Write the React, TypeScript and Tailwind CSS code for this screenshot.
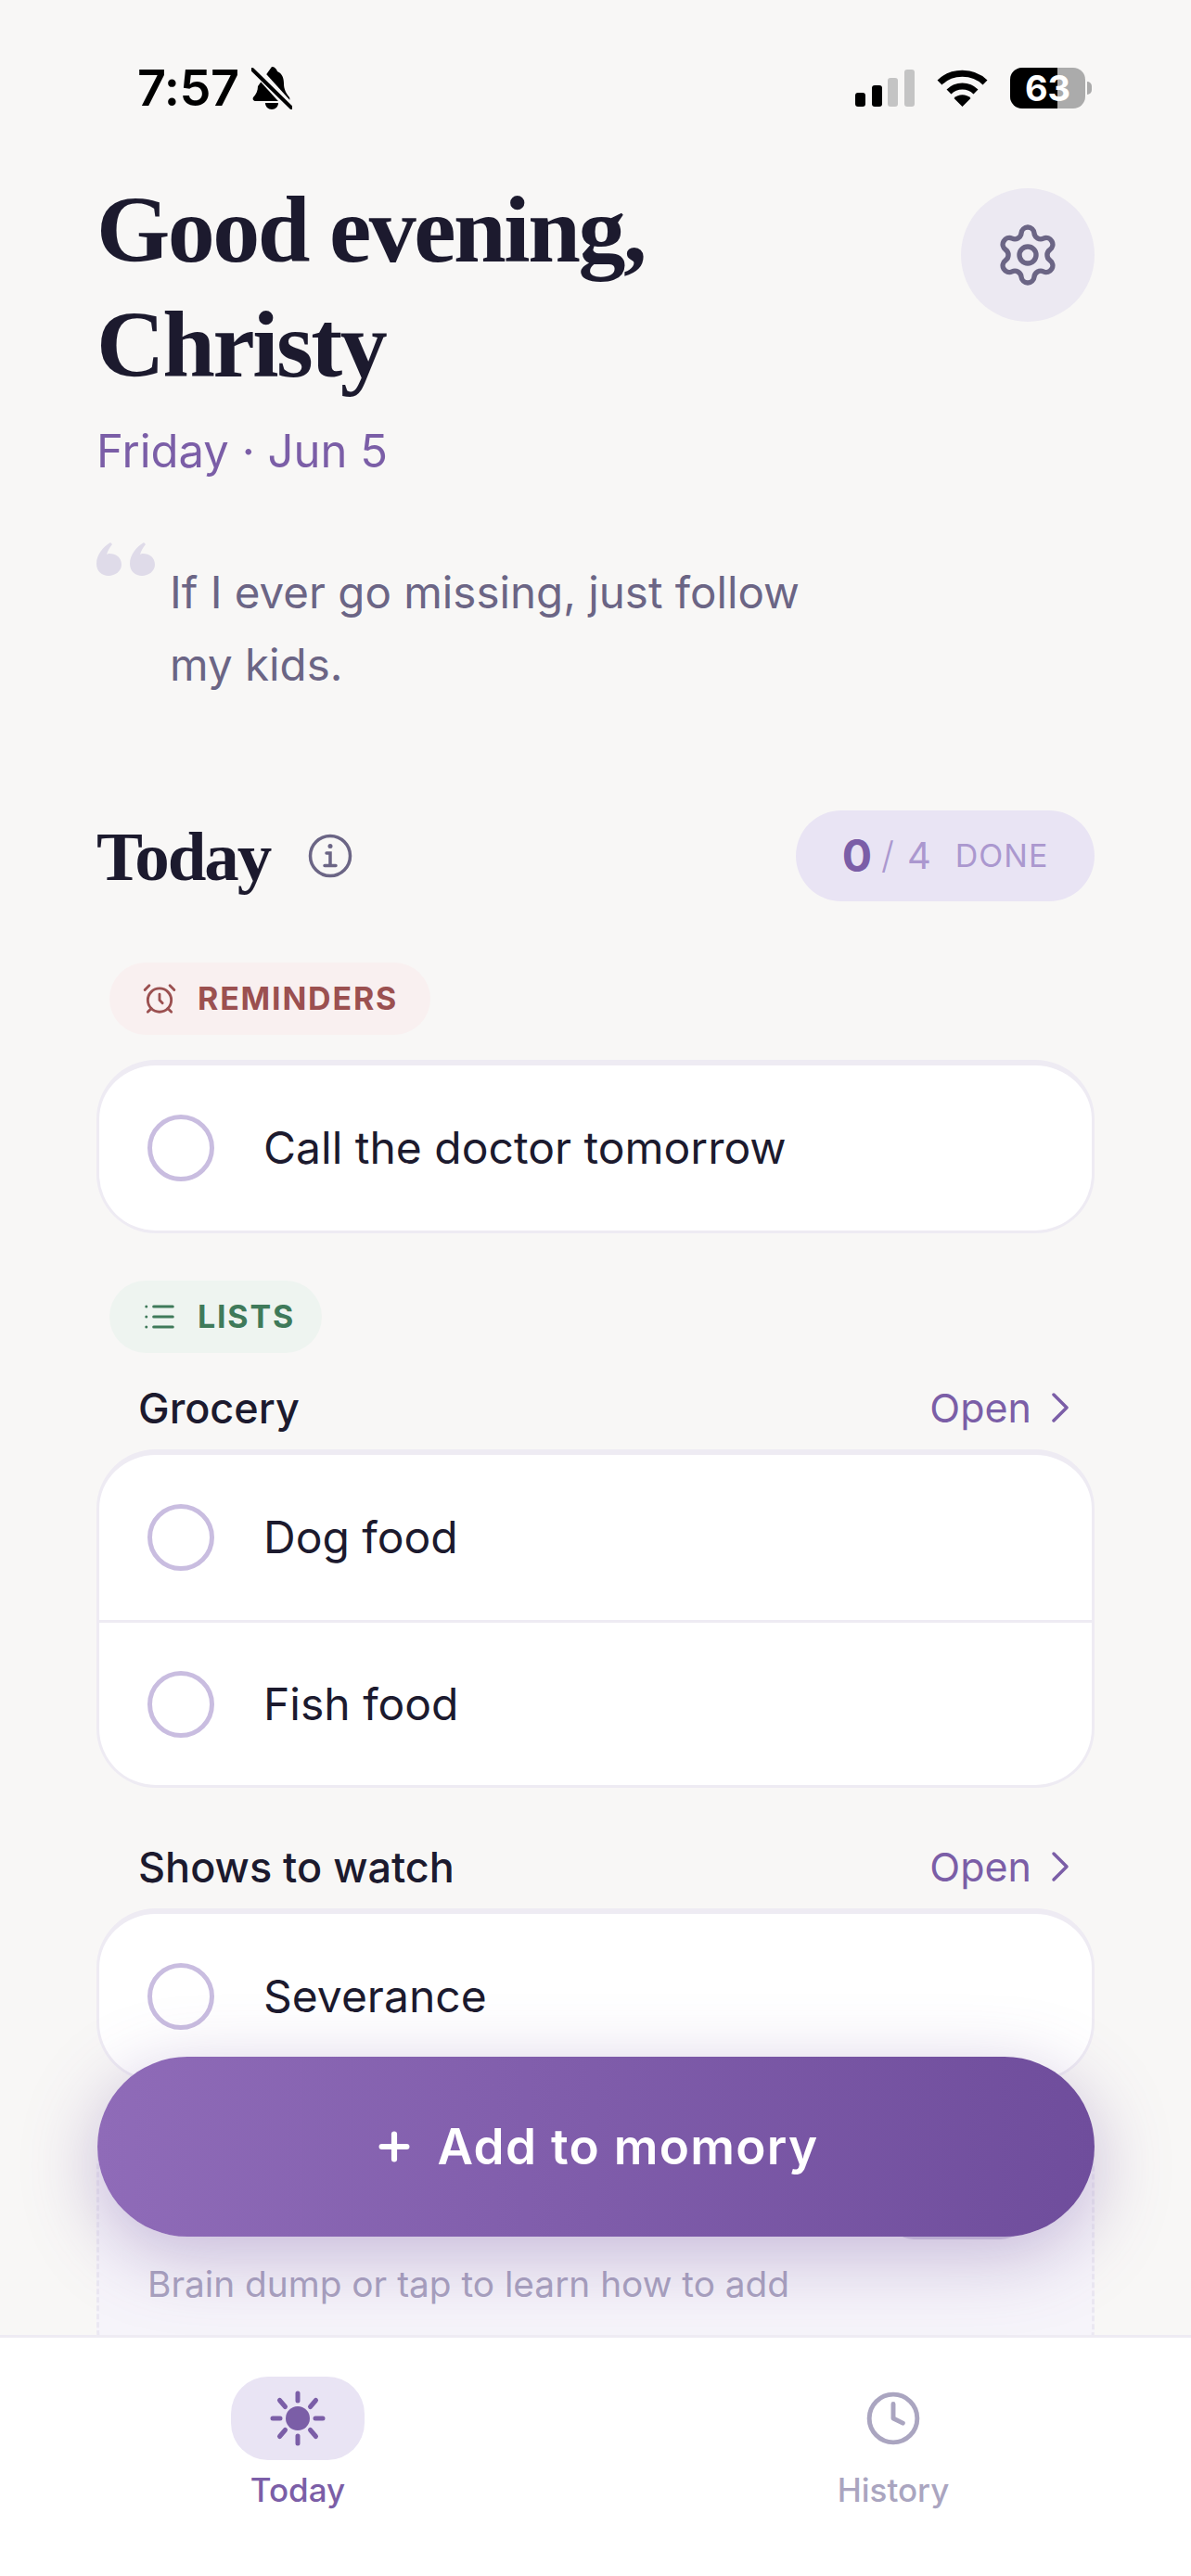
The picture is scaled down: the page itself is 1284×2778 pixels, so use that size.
import React from "react";
import { AlarmClock, Clock, List, Plus, Settings } from "lucide-react";

const sans = "font-['Inter','Noto_Sans',sans-serif]";
const serif = "font-['Liberation_Serif',serif]";

const StatusBar: React.FC = () => (
  <div className="flex h-[190px] items-center justify-between pl-[148px] pr-[107px]">
    <div className="flex items-center gap-[13px]">
      <span className="text-[54px] leading-none font-semibold tracking-[-0.5px] text-black">7:57</span>
      <svg width="44" height="46" viewBox="0 0 44 46">
        <path d="M22 0c3 0 5 2 6 5 5 2 7 7 7 13 0 6 2 10 6 15 1 3 0 4-3 4H5c-3 0-4-2-3-4 3-3 5-7 5-12L22 0z" fill="#000" />
        <path d="M15 39h14c0 4-3 7-7 7s-7-3-7-7z" fill="#000" />
        <path d="M3 1 42 44" stroke="#f8f7f6" strokeWidth="10" />
        <path d="M1 3 43 44" stroke="#000" strokeWidth="4" strokeLinecap="round" />
      </svg>
    </div>
    <div className="flex items-center">
      <svg width="64" height="40" viewBox="0 0 64 40">
        <rect x="0" y="25" width="11" height="15" rx="3" fill="#000" />
        <rect x="18" y="17" width="11" height="23" rx="3" fill="#000" />
        <rect x="35" y="9" width="11" height="31" rx="3" fill="#c4c4c4" />
        <rect x="53" y="0" width="11" height="40" rx="3" fill="#c4c4c4" />
      </svg>
      <svg className="ml-[24px]" width="55" height="40" viewBox="0 0 55 40" fill="none" stroke="#000" strokeWidth="7">
        <path d="M3 14C16 1 39 1 52 14" />
        <path d="M13 24C21 16 34 16 42 24" />
        <path d="M27.5 40 18.500 31C23 26 32 26 36.500 31z" fill="#000" stroke="none" />
      </svg>
      <div className="ml-[24px] flex items-center">
        <div className="relative flex h-[44px] w-[81px] items-center justify-center overflow-hidden rounded-[13px] bg-[#ababab]">
          <div className="absolute top-0 bottom-0 left-0 w-[51px] bg-black" />
          <span className="relative text-[38px] leading-none font-bold text-white">63</span>
        </div>
        <div className="ml-[2px] h-[14px] w-[5px] rounded-r-full bg-[#ababab]" />
      </div>
    </div>
  </div>
);

const InfoIcon: React.FC = () => (
  <svg width="48" height="48" viewBox="0 0 48 48" fill="none" stroke="#6b6585" strokeWidth="3.5" strokeLinecap="round">
    <circle cx="24" cy="24" r="21.500" />
    <circle cx="24" cy="13.500" r="2.500" fill="#6b6585" stroke="none" />
    <path d="M20 21h4v13M18 34.500h12" />
  </svg>
);

const SunIcon: React.FC = () => (
  <svg width="60" height="60" viewBox="0 0 60 60" fill="none" stroke="currentColor" strokeWidth="5" strokeLinecap="round">
    <circle cx="30" cy="30" r="13" fill="currentColor" stroke="none" />
    <path d="M30 3v8M30 49v8M3 30h8M49 30h8M10.500 10.500l6 7M49.500 10.500l-6 7M10.500 49.500l6-7M49.500 49.500l-6-7" />
  </svg>
);

const Check: React.FC = () => (
  <div className="h-[72px] w-[72px] shrink-0 rounded-full border-[5px] border-[#c9bde0]" />
);

const Row: React.FC<{ label: string; divided?: boolean }> = ({ label, divided }) => (
  <div className={`flex h-[178px] items-center gap-[53px] pl-[52px] ${divided ? "border-t-[3px] border-[#eeebf3]" : ""}`}>
    <Check />
    <span className="text-[48px] leading-none text-[#1c1a2e]">{label}</span>
  </div>
);

const Card: React.FC<{ children: React.ReactNode }> = ({ children }) => (
  <div className="overflow-hidden rounded-[64px] border-[3px] border-t-[6px] border-[#eeebf3] bg-white">{children}</div>
);

const ListHeader: React.FC<{ title: string }> = ({ title }) => (
  <div className="mb-[3px] flex h-[84px] items-center justify-between pr-[27px] pl-[45px]">
    <span className="text-[45px] leading-none font-medium text-[#1c1a2e]">{title}</span>
    <span className="flex items-center gap-[21px] text-[43px] leading-none text-[#7b5ea7]">
      Open
      <svg width="20" height="34" viewBox="0 0 20 34" fill="none" stroke="currentColor" strokeWidth="3.500" strokeLinecap="round" strokeLinejoin="round">
        <path d="M3 3l14 14L3 31" />
      </svg>
    </span>
  </div>
);

export default function App() {
  return (
    <div className={`relative flex h-[2778px] w-[1284px] flex-col overflow-hidden bg-[#f8f7f6] ${sans}`}>
      <main className="min-h-0 flex-1 overflow-hidden">
        <StatusBar />

        <section className="px-[104px]">
          <div className="flex items-start justify-between">
            <h1 className={`-mt-[4px] text-[102px] leading-[124px] font-bold tracking-[-2.500px] text-[#1c1a2e] ${serif}`}>
              Good evening,
              <br />
              Christy
            </h1>
            <button className="mt-[13px] flex h-[144px] w-[144px] items-center justify-center rounded-full bg-[#ece9f2] text-[#6b6585]">
              <Settings size={72} strokeWidth={1.8} />
            </button>
          </div>
          <p className="mt-[23px] text-[49px] leading-[60px] text-[#7b5ea7]">Friday · Jun 5</p>

          <div className="mt-[60px] flex items-start">
            <svg className="mt-[8px] shrink-0" width="64" height="36" viewBox="0 0 64 36" fill="#dfdbe9">
              <path d="M15 0c-8 5-15 13-15 23 0 8 6 13 13 13s14-5 14-12c0-8-6-12-13-12-1 0-2 0-3 1 1-4 3-7 6-11z" />
              <path d="M51 0c-8 5-15 13-15 23 0 8 6 13 13 13s14-5 14-12c0-8-6-12-13-12-1 0-2 0-3 1 1-4 3-7 6-11z" />
            </svg>
            <p className="mt-[23px] ml-[15px] w-[780px] text-[47.500px] leading-[78px] text-[#6b6585]">
              If I ever go missing, just follow
              <br />
              my kids.
            </p>
          </div>

          <div className="mt-[118px] flex items-center justify-between">
            <div className="flex items-center gap-[41px]">
              <h2 className={`text-[75px] leading-none font-bold tracking-[-2px] text-[#1c1a2e] ${serif}`}>Today</h2>
              <InfoIcon />
            </div>
            <div className="flex h-[98px] w-[322px] items-center justify-center rounded-full bg-[#e9e4f4] text-[#ab98cf]">
              <span className="text-[48px] leading-none font-bold text-[#7b5ea7]">0</span>
              <span className="ml-[10px] text-[40px] leading-none font-light">/</span>
              <span className="ml-[14px] text-[40px] leading-none">4</span>
              <span className="ml-[26px] text-[34px] leading-none tracking-[1px]">DONE</span>
            </div>
          </div>

          <div className="mt-[66px] ml-[14px] flex h-[78px] w-[346px] items-center gap-[22px] rounded-full bg-[#f9f0f0] pl-[35px] text-[#9b5050]">
            <AlarmClock size={38} strokeWidth={1.8} />
            <span className="text-[34px] leading-none font-bold tracking-[1.8px]">REMINDERS</span>
          </div>

          <div className="mt-[27px]">
            <Card>
              <Row label="Call the doctor tomorrow" />
            </Card>
          </div>

          <div className="mt-[51px] ml-[14px] flex h-[78px] w-[229px] items-center gap-[22px] rounded-full bg-[#eef4f0] pl-[35px] text-[#3f7a5a]">
            <List size={38} strokeWidth={1.9} />
            <span className="text-[34px] leading-none font-bold tracking-[1.8px]">LISTS</span>
          </div>

          <div className="mt-[17px]">
            <ListHeader title="Grocery" />
          </div>
          <Card>
            <Row label="Dog food" />
            <Row label="Fish food" divided />
          </Card>

          <div className="mt-[43px]">
            <ListHeader title="Shows to watch" />
          </div>
          <Card>
            <Row label="Severance" />
          </Card>

          <div className="relative mt-[30px] h-[300px] rounded-[64px] border-[3px] border-dashed border-[#ebe8f2] bg-[#f6f4fa]">
            <div className="absolute top-[37px] right-[70px] h-[100px] w-[150px] rounded-[28px] bg-[#d4cce3]" />
            <p className="pt-[160px] pl-[52px] text-[38.800px] leading-[50px] text-[#a9a3bf]">
              Brain dump or tap to learn how to add
            </p>
          </div>
        </section>
      </main>

      <button className="absolute top-[2218px] left-[105px] flex h-[194px] w-[1075px] items-center justify-center gap-[23px] rounded-full bg-gradient-to-r from-[#8f6bb8] to-[#6f4d9c] text-white shadow-[0_20px_80px_rgba(111,77,156,0.36)]">
        <Plus size={46} strokeWidth={3.2} />
        <span className="text-[53px] leading-none font-semibold tracking-[1.3px]">Add to momory</span>
      </button>

      <nav className="relative flex h-[260px] shrink-0 border-t-[3px] border-[#eeebf3] bg-white">
        <div className="flex w-[642px] flex-col items-center pt-[42px]">
          <div className="flex h-[90px] w-[144px] items-center justify-center rounded-[40px] bg-[#e9e4f4] text-[#7b5ea7]">
            <SunIcon />
          </div>
          <span className="mt-[9px] text-[35px] leading-[46px] font-medium text-[#7b5ea7]">Today</span>
        </div>
        <div className="flex w-[642px] flex-col items-center pt-[42px] text-[#aaa5c0]">
          <div className="flex h-[90px] items-center justify-center">
            <Clock size={62} strokeWidth={1.9} />
          </div>
          <span className="mt-[9px] text-[35px] leading-[46px] font-medium">History</span>
        </div>
      </nav>
    </div>
  );
}
